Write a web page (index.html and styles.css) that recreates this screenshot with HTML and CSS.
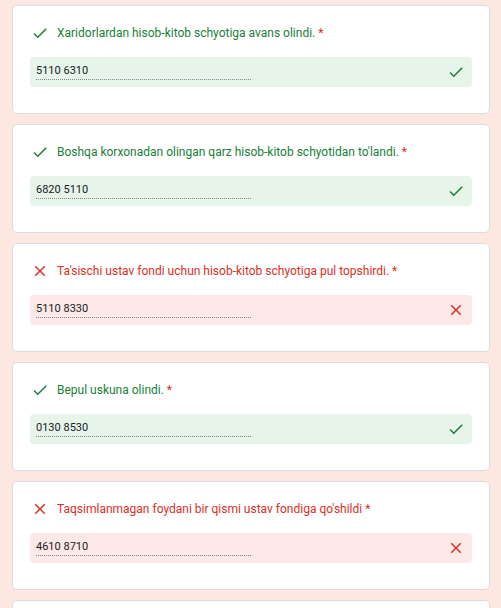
FILE: index.html
```html
<!DOCTYPE html>
<html lang="uz">
<head>
<meta charset="utf-8">
<title>Javoblar</title>
<link rel="stylesheet" href="styles.css">
</head>
<body>
<main class="list">
  <section class="card ok">
    <div class="q">
      <svg class="ico" viewBox="0 0 24 24"><path d="M9 16.17L4.83 12l-1.42 1.41L9 19 21 7l-1.41-1.41z"/></svg>
      <span class="qtext">Xaridorlardan hisob-kitob schyotiga avans olindi. <span class="req">*</span></span>
    </div>
    <div class="field">
      <span class="val">5110 6310</span>
      <svg class="ico" viewBox="0 0 24 24"><path d="M9 16.17L4.83 12l-1.42 1.41L9 19 21 7l-1.41-1.41z"/></svg>
    </div>
  </section>
  <section class="card ok">
    <div class="q">
      <svg class="ico" viewBox="0 0 24 24"><path d="M9 16.17L4.83 12l-1.42 1.41L9 19 21 7l-1.41-1.41z"/></svg>
      <span class="qtext">Boshqa korxonadan olingan qarz hisob-kitob schyotidan to'landi. <span class="req">*</span></span>
    </div>
    <div class="field">
      <span class="val">6820 5110</span>
      <svg class="ico" viewBox="0 0 24 24"><path d="M9 16.17L4.83 12l-1.42 1.41L9 19 21 7l-1.41-1.41z"/></svg>
    </div>
  </section>
  <section class="card bad">
    <div class="q">
      <svg class="ico" viewBox="0 0 24 24"><path d="M19 6.41L17.59 5 12 10.59 6.41 5 5 6.41 10.59 12 5 17.59 6.41 19 12 13.41 17.59 19 19 17.59 13.41 12z"/></svg>
      <span class="qtext">Ta'sischi ustav fondi uchun hisob-kitob schyotiga pul topshirdi. <span class="req">*</span></span>
    </div>
    <div class="field">
      <span class="val">5110 8330</span>
      <svg class="ico" viewBox="0 0 24 24"><path d="M19 6.41L17.59 5 12 10.59 6.41 5 5 6.41 10.59 12 5 17.59 6.41 19 12 13.41 17.59 19 19 17.59 13.41 12z"/></svg>
    </div>
  </section>
  <section class="card ok">
    <div class="q">
      <svg class="ico" viewBox="0 0 24 24"><path d="M9 16.17L4.83 12l-1.42 1.41L9 19 21 7l-1.41-1.41z"/></svg>
      <span class="qtext">Bepul uskuna olindi. <span class="req">*</span></span>
    </div>
    <div class="field">
      <span class="val">0130 8530</span>
      <svg class="ico" viewBox="0 0 24 24"><path d="M9 16.17L4.83 12l-1.42 1.41L9 19 21 7l-1.41-1.41z"/></svg>
    </div>
  </section>
  <section class="card bad">
    <div class="q">
      <svg class="ico" viewBox="0 0 24 24"><path d="M19 6.41L17.59 5 12 10.59 6.41 5 5 6.41 10.59 12 5 17.59 6.41 19 12 13.41 17.59 19 19 17.59 13.41 12z"/></svg>
      <span class="qtext">Taqsimlanmagan foydani bir qismi ustav fondiga qo'shildi <span class="req">*</span></span>
    </div>
    <div class="field">
      <span class="val">4610 8710</span>
      <svg class="ico" viewBox="0 0 24 24"><path d="M19 6.41L17.59 5 12 10.59 6.41 5 5 6.41 10.59 12 5 17.59 6.41 19 12 13.41 17.59 19 19 17.59 13.41 12z"/></svg>
    </div>
  </section>
  <section class="card empty"></section>
</main>
</body>
</html>
```
FILE: styles.css
```css
html, body {
  margin: 0;
  padding: 0;
  background: #fde8e1;
}
body {
  font-family: Roboto, "Liberation Sans", Arial, sans-serif;
  color: #202124;
}
.list {
  display: flex;
  flex-direction: column;
  gap: 10px;
  padding: 5px 11px 10px 12px;
}
.card {
  box-sizing: border-box;
  height: 109px;
  background: #fff;
  border: 1px solid #dadce0;
  border-radius: 5px;
  padding: 18px 17px 26px 17px;
  display: flex;
  flex-direction: column;
  gap: 15px;
}
.q {
  display: flex;
  align-items: center;
  height: 18px;
  padding-left: 1px;
}
.q .ico {
  width: 18px;
  height: 18px;
  flex: none;
  margin-right: 8px;
}
.qtext {
  font-size: 12px;
  line-height: 18px;
  white-space: nowrap;
}
.req {
  color: #d93025;
}
.ok .qtext, .ok .ico { color: #188038; fill: #188038; }
.bad .qtext, .bad .ico { color: #d93025; fill: #d93025; }
.field {
  height: 30px;
  border-radius: 4px;
  display: flex;
  align-items: center;
  justify-content: space-between;
  padding: 0 7px 0 6px;
}
.ok .field { background: #e6f4ea; }
.bad .field { background: #fce8e6; }
.val {
  align-self: flex-start;
  margin-top: 6px;
  width: 215px;
  height: 16px;
  line-height: 16px;
  font-size: 11px;
  color: #202124;
  border-bottom: 1px dotted #80868b;
}
.field .ico {
  width: 18px;
  height: 18px;
  flex: none;
}
```
